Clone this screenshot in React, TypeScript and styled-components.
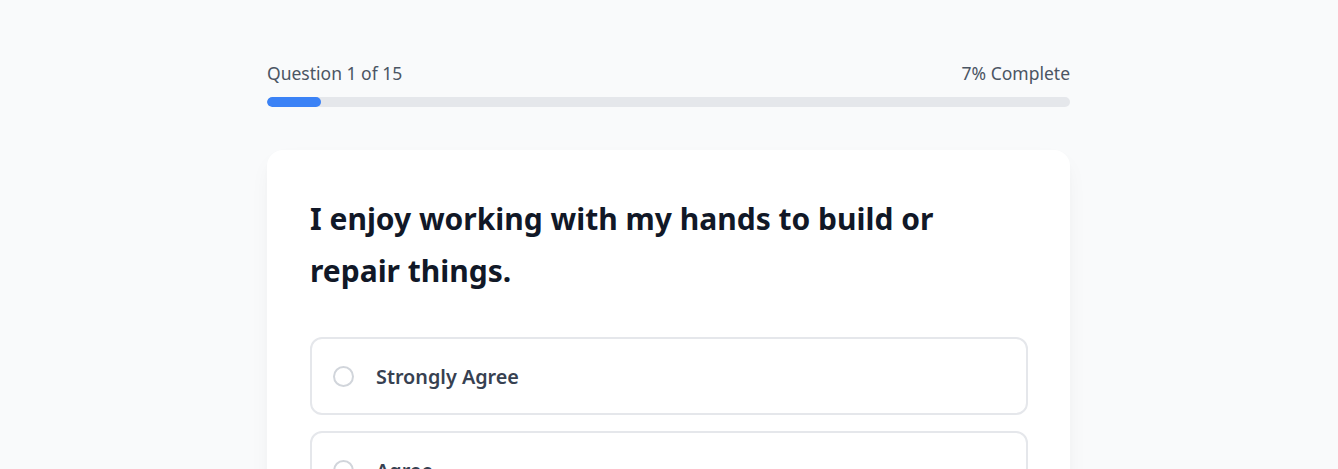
import React, { useState } from "react";
import styled, { createGlobalStyle } from "styled-components";

const Global = createGlobalStyle`
  html, body { margin: 0; padding: 0; background: #f9fafb; }
  body { font-family: "Noto Sans", "Open Sans", "Liberation Sans", sans-serif; -webkit-font-smoothing: antialiased; }
  * { box-sizing: border-box; }
`;

const Page = styled.div`
  min-height: 469px;
  padding: 59px 1px 40px 0;
  display: flex;
  justify-content: center;
`;

const Container = styled.div`
  width: 803px;
  display: flex;
  flex-direction: column;
`;

const ProgressHeader = styled.div`
  display: flex;
  justify-content: space-between;
  align-items: center;
  font-size: 17.5px;
  line-height: 28px;
  color: #4b5563;
  margin-bottom: 10px;
`;

const Track = styled.div`
  height: 10px;
  border-radius: 999px;
  background: #e5e7eb;
  overflow: hidden;
`;

const Fill = styled.div`
  height: 100%;
  border-radius: 999px;
  background: #3b82f6;
`;

const Card = styled.div`
  margin-top: 43px;
  background: #ffffff;
  border-radius: 16px;
  box-shadow: 0 10px 25px -5px rgba(0, 0, 0, 0.06), 0 4px 10px -4px rgba(0, 0, 0, 0.04);
  padding: 43px 42px 43px 43px;
`;

const Question = styled.h2`
  margin: 0 0 40px;
  font-size: 30px;
  line-height: 52px;
  font-weight: 700;
  color: #111827;
`;

const Options = styled.div`
  display: flex;
  flex-direction: column;
  gap: 16px;
`;

const Option = styled.button<{ $selected: boolean }>`
  display: flex;
  align-items: center;
  gap: 22px;
  width: 100%;
  height: 78px;
  padding: 0 21px;
  border: 2px solid ${(p) => (p.$selected ? "#3b82f6" : "#e5e7eb")};
  border-radius: 12px;
  background: ${(p) => (p.$selected ? "#eff6ff" : "#ffffff")};
  font-family: inherit;
  font-size: 19.8px;
  font-weight: 600;
  color: #374151;
  text-align: left;
  cursor: pointer;
`;

const Radio = styled.span<{ $selected: boolean }>`
  width: 21px;
  height: 21px;
  flex: none;
  border-radius: 50%;
  border: 2px solid ${(p) => (p.$selected ? "#3b82f6" : "#d1d5db")};
  background: ${(p) => (p.$selected ? "#3b82f6" : "transparent")};
`;

const options = ["Strongly Agree", "Agree", "Neutral", "Disagree", "Strongly Disagree"];

export default function App() {
  const [selected, setSelected] = useState<number | null>(null);
  const current = 1;
  const total = 15;
  const pct = (current / total) * 100;
  return (
    <>
      <Global />
      <Page>
        <Container>
          <ProgressHeader>
            <span>Question {current} of {total}</span>
            <span>{Math.round(pct)}% Complete</span>
          </ProgressHeader>
          <Track>
            <Fill style={{ width: `${pct}%` }} />
          </Track>
          <Card>
            <Question>I enjoy working with my hands to build or repair things.</Question>
            <Options>
              {options.map((o, i) => (
                <Option key={o} $selected={selected === i} onClick={() => setSelected(i)}>
                  <Radio $selected={selected === i} />
                  {o}
                </Option>
              ))}
            </Options>
          </Card>
        </Container>
      </Page>
    </>
  );
}
